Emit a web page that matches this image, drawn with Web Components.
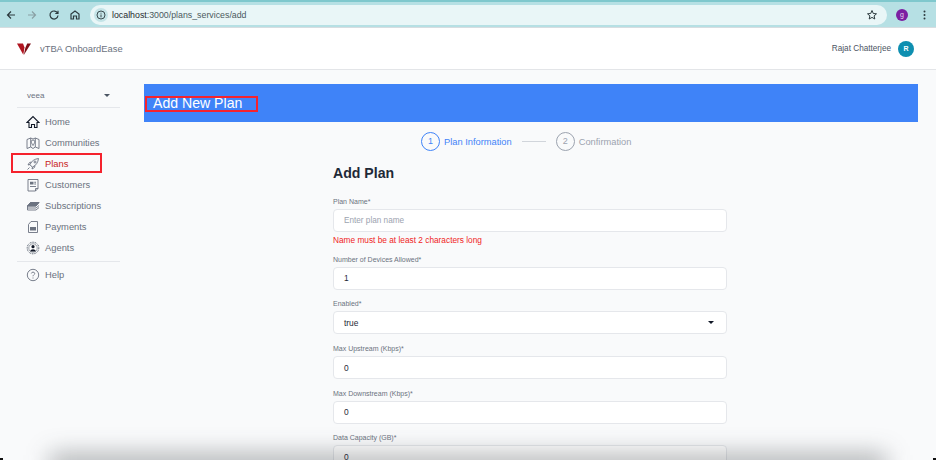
<!DOCTYPE html>
<html>
<head>
<meta charset="utf-8">
<style>
  html, body { margin: 0; height: 100%; overflow: hidden; background: #f9fafb; }
  body { font-family: "Liberation Sans", Arial, sans-serif; width: 936px; height: 460px; position: relative; display: flex; flex-direction: column; }
</style>
</head>
<body>
<browser-bar url-host="localhost" url-path=":3000/plans_services/add"></browser-bar>
<app-header user="Rajat Chatterjee"></app-header>
<app-shell>
  <side-nav slot="nav"></side-nav>
  <plan-form></plan-form>
</app-shell>
<bottom-shade></bottom-shade>

<script>
class BrowserBar extends HTMLElement {
  constructor() {
    super();
    const host = this.getAttribute('url-host');
    const path = this.getAttribute('url-path');
    this.attachShadow({mode: 'open'}).innerHTML = `
    <style>
      :host { display: flex; align-items: center; height: 28px; box-sizing: border-box; flex: none;
        background: #b6e0e4; border-top: 2px solid #7fc8cd; border-bottom: 1px solid #d7dde0; padding: 0 10px 0 5px; }
      svg { display: block; flex: none; }
      .btns { display: flex; gap: 9.300px; align-items: center; width: 85px; }
      .url { flex: 1; height: 20px; background: #e9f6f7; border-radius: 10px; display: flex; align-items: center;
        font-size: 8.800px; color: #4b5a5e; padding-left: 4px; min-width: 0; }
      .url b { font-weight: 400; color: #1f2a2e; }
      .info { width: 14px; height: 14px; border-radius: 50%; background: #c4e4e7; display: flex; align-items: center; justify-content: center; margin-right: 4px; }
      .star { margin-left: auto; margin-right: 9px; }
      .me { width: 12px; height: 12px; border-radius: 50%; background: #7b1fa2; color: #e6d5ec; font-size: 7px; text-align: center; line-height: 12px; margin: 0 15px 0 9px; flex: none; }
    </style>
    <div class="btns">
      <svg width="12" height="12" viewBox="0 0 12 12" fill="none" stroke="#2c3a3e" stroke-width="1.2"><path d="M10 6H2.500M6 2.500 2.500 6 6 9.500"/></svg>
      <svg width="12" height="12" viewBox="0 0 12 12" fill="none" stroke="#8aa0a4" stroke-width="1.2"><path d="M2 6h7.500M6 2.500 9.500 6 6 9.500"/></svg>
      <svg width="12" height="12" viewBox="0 0 12 12" fill="none" stroke="#2c3a3e" stroke-width="1.2"><path d="M9.600 4.200A4 4 0 1 0 10 6.500M10 1.800v2.700H7.300"/></svg>
      <svg width="12" height="12" viewBox="0 0 12 12" fill="none" stroke="#2c3a3e" stroke-width="1.200"><path d="M2 10V5l4-3 4 3v5H7.500V7h-3v3z"/></svg>
    </div>
    <div class="url">
      <span class="info"><svg width="10" height="10" viewBox="0 0 10 10" fill="none" stroke="#2c3a3e" stroke-width=".9"><circle cx="5" cy="5" r="4"/><path d="M5 4.500V7.300M5 2.800v.8"/></svg></span>
      <span><b>${host}</b>${path}</span>
      <svg class="star" width="12" height="12" viewBox="0 0 12 12" fill="none" stroke="#2c3a3e" stroke-width="1"><path d="M6 1.500 7.300 4.500l3.200.3-2.400 2.100.7 3.100L6 8.400 3.200 10l.7-3.100L1.500 4.800l3.200-.3z"/></svg>
    </div>
    <span class="me">g</span>
    <svg width="3" height="10" viewBox="0 0 3 10" fill="#2c3a3e"><circle cx="1.500" cy="1.500" r="1"/><circle cx="1.500" cy="5" r="1"/><circle cx="1.500" cy="8.500" r="1"/></svg>`;
  }
}
customElements.define('browser-bar', BrowserBar);

class AppHeader extends HTMLElement {
  constructor() {
    super();
    this.attachShadow({mode: 'open'}).innerHTML = `
    <style>
      :host { display: flex; align-items: center; flex: none; height: 42px; box-sizing: border-box; background: #fff;
        border-bottom: 1px solid #e3e5e8; padding: 0 22px 0 17px; }
      .name { margin-left: 9px; font-size: 9.350px; color: #6b7280; }
      .user { margin-left: auto; font-size: 8.200px; color: #4b5563; margin-right: 7px; }
      .av { width: 16px; height: 16px; border-radius: 50%; background: #0e8fb0; color: #fff; font-size: 7px; font-weight: 700; text-align: center; line-height: 16px; }
    </style>
    <svg width="14" height="14" viewBox="0 0 14 14"><path d="M0 1.500H6L7.500 5.500 6.300 12.800z" fill="#b01520"/><path d="M14 1.500 6.800 13 8.300 6 10.200 1.500z" fill="#7d0f17"/></svg>
    <span class="name">vTBA OnboardEase</span>
    <span class="user">${this.getAttribute('user')}</span>
    <span class="av">R</span>`;
  }
}
customElements.define('app-header', AppHeader);

class AppShell extends HTMLElement {
  constructor() {
    super();
    this.attachShadow({mode: 'open'}).innerHTML = `
    <style>
      :host { display: flex; flex: 1; min-height: 0; background: #f9fafb; }
      ::slotted(side-nav) { width: 144px; flex: none; }
    </style>
    <slot name="nav"></slot><slot></slot>`;
  }
}
customElements.define('app-shell', AppShell);

const NAV_ICONS = {
  home: '<path d="M1 7.500 7 1.500l6 6H11V12.500H8.500V9.500H5.500V12.500H3V7.500z" stroke="#111827" stroke-width="1.100"/>',
  map: '<path d="M1 3.500 4.700 2 7 3 9.300 2 13 3.500V12.500L9.300 11 7 12.500 4.700 11 1 12.500zM4.700 2V11M9.300 2V11"/><path d="M7 9.500C5.800 7.500 5.300 6.700 5.300 5.700A1.700 1.700 0 0 1 8.700 5.700C8.700 6.700 8.200 7.500 7 9.500z"/>',
  rocket: '<path d="M5 9 4 7.500C5.500 4 8.500 2 12.500 1.500 12 5.500 10 8.500 6.500 10zM4 7.500 2 8l1.500-2.500L5.500 5M6.500 10 6 12l2.500-1.500L9 8.500M3.500 10.500 1.500 12.500"/><circle cx="9" cy="5" r="1"/>',
  news: '<path d="M2 1.500h10v9l-2.500 2.500H2zM9.500 13v-2.500H12"/><path d="M4 3.800h3.500v2.700H4zM8.300 3.800H10v1H8.300zM8.300 5.500H10v1H8.300z" fill="#6b7280" stroke="none"/><path d="M4 8.500h6"/>',
  stack: '<path d="M1.500 11h8.500l3-2.500M1.500 9h8.500l3-2.500M1.500 7 4.500 3.500H13L10 7zM1.500 7V11" fill="none"/><path d="M1.500 7 4.500 3.500H13L10 7z" fill="#6b7280"/>',
  doc: '<path d="M5 1.500h6.500V12.500h-9V4.500z"/><path d="M4 7h6v3.500H4z" fill="#6b7280" stroke="none"/>',
  agent: '<circle cx="7" cy="7" r="5.800" stroke-dasharray="1 .8" stroke="#374151"/><circle cx="7" cy="7" r="4.200" fill="#fff" stroke="#374151" stroke-width=".5"/><circle cx="7" cy="5.700" r="1.600" fill="#111827" stroke="none"/><path d="M4.300 10.500c.2-3 5.200-3 5.400 0z" fill="#111827" stroke="none"/>',
  help: '<circle cx="7" cy="7" r="5.700"/><path d="M5.300 5.500C5.500 3.600 8.700 3.700 8.700 5.500 8.700 6.800 7 6.800 7 8.300M7 9.500v1"/>'
};

class NavItem extends HTMLElement {
  constructor() {
    super();
    const icon = NAV_ICONS[this.getAttribute('icon')];
    this.attachShadow({mode: 'open'}).innerHTML = `
    <style>
      :host { display: flex; align-items: center; gap: 5px; height: 21.100px; padding-left: 9px; font-size: 9.350px; color: #6b7280; }
      :host([active]) { color: #c81e1e; }
      svg { width: 14px; height: 14px; flex: none; fill: none; stroke: #6b7280; stroke-width: .9; }
    </style>
    <svg viewBox="0 0 14 14">${icon}</svg><slot></slot>`;
  }
}
customElements.define('nav-item', NavItem);

class SideNav extends HTMLElement {
  constructor() {
    super();
    this.attachShadow({mode: 'open'}).innerHTML = `
    <style>
      :host { display: block; padding: 17px 24px 0 17px; box-sizing: border-box; }
      .org { display: flex; align-items: center; justify-content: space-between; height: 19px; padding: 0 10px 2px; box-sizing: border-box; font-size: 8px; color: #6b7280; }
      .org i { width: 0; height: 0; border: 3px solid transparent; border-top: 3.500px solid #4b5563; border-bottom: 0; }
      hr { border: 0; height: 1px; background: #e5e7eb; margin: 1px 0 0; }
      .items { padding-top: 3px; }
      .help { margin-top: 2.500px; }
      .wrap { position: relative; }
      .box { position: absolute; left: -6px; top: 0; width: 91px; height: 20px; border: 2px solid #f5222d; box-sizing: border-box; pointer-events: none; }
    </style>
    <div class="org"><span>veea</span><i></i></div>
    <hr>
    <div class="items">
      <nav-item icon="home">Home</nav-item>
      <nav-item icon="map">Communities</nav-item>
      <div class="wrap"><nav-item icon="rocket" active>Plans</nav-item><span class="box"></span></div>
      <nav-item icon="news">Customers</nav-item>
      <nav-item icon="stack">Subscriptions</nav-item>
      <nav-item icon="doc">Payments</nav-item>
      <nav-item icon="agent">Agents</nav-item>
    </div>
    <hr style="margin-top:2.500px">
    <div class="help"><nav-item icon="help">Help</nav-item></div>`;
  }
}
customElements.define('side-nav', SideNav);

class FormField extends HTMLElement {
  constructor() {
    super();
    const value = this.getAttribute('value');
    const holder = this.getAttribute('placeholder');
    const select = this.hasAttribute('select');
    this.attachShadow({mode: 'open'}).innerHTML = `
    <style>
      :host { display: block; margin-bottom: 9.700px; }
      label { display: block; font-size: 7px; line-height: 9px; color: #6b7280; margin-bottom: 3px; }
      .box { height: 23px; box-sizing: border-box; background: #fff; border: 1px solid #e5e7eb; border-radius: 4px;
        display: flex; align-items: center; justify-content: space-between; padding: 0 11px 0 10px; font-size: 8.400px; color: #1f2937; }
      .box.empty { color: #9ca3af; font-size: 8.200px; }
      i { width: 0; height: 0; border: 3px solid transparent; border-top: 3.500px solid #111827; border-bottom: 0; margin-right: 1px; }
      .err { font-size: 8.300px; line-height: 9px; color: #f01d1d; margin-top: 4px; }
    </style>
    <label><slot></slot></label>
    <div class="box ${holder ? 'empty' : ''}"><span>${holder || value}</span>${select ? '<i></i>' : ''}</div>
    ${this.hasAttribute('error') ? `<div class="err">${this.getAttribute('error')}</div>` : ''}`;
  }
}
customElements.define('form-field', FormField);

class StepDot extends HTMLElement {
  constructor() {
    super();
    this.attachShadow({mode: 'open'}).innerHTML = `
    <style>
      :host { display: flex; align-items: center; gap: 4px; font-size: 9.300px; color: #9ca3af; }
      :host([on]) { color: #3f83f8; }
      b { font-weight: 400; width: 19px; height: 19px; box-sizing: border-box; border: 1px solid currentColor; border-radius: 50%; text-align: center; line-height: 17px; font-size: 9px; }
    </style>
    <b>${this.getAttribute('n')}</b><slot></slot>`;
  }
}
customElements.define('step-dot', StepDot);

class PlanForm extends HTMLElement {
  constructor() {
    super();
    this.attachShadow({mode: 'open'}).innerHTML = `
    <style>
      :host { display: block; width: 774px; padding-top: 14px; box-sizing: border-box; overflow: hidden; }
      .banner { position: relative; height: 38px; background: #3f83f8; color: #fff; font-size: 14.100px; display: flex; align-items: center; padding-left: 9px; }
      .box { position: absolute; left: 1px; top: 12px; width: 113px; height: 16px; border: 2px solid #f5222d; box-sizing: border-box; }
      .steps { display: flex; align-items: center; gap: 10px; height: 19px; margin: 10px 0 0 277px; }
      .line { width: 24px; height: 1px; background: #d1d5db; }
      .col { width: 394px; margin: 0 0 0 189px; }
      h2 { margin: 13px 0 15px; font-size: 14.100px; line-height: 18px; font-weight: 700; color: #1f2937; }
    </style>
    <div class="banner">Add New Plan<span class="box"></span></div>
    <div class="steps"><step-dot n="1" on>Plan Information</step-dot><span class="line"></span><step-dot n="2">Confirmation</step-dot></div>
    <div class="col">
      <h2>Add Plan</h2>
      <form-field placeholder="Enter plan name" error="Name must be at least 2 characters long">Plan Name*</form-field>
      <form-field value="1">Number of Devices Allowed*</form-field>
      <form-field value="true" select>Enabled*</form-field>
      <form-field value="0">Max Upstream (Kbps)*</form-field>
      <form-field value="0">Max Downstream (Kbps)*</form-field>
      <form-field value="0">Data Capacity (GB)*</form-field>
    </div>`;
  }
}
customElements.define('plan-form', PlanForm);

class BottomShade extends HTMLElement {
  constructor() {
    super();
    this.attachShadow({mode: 'open'}).innerHTML = `
    <style>
      :host { position: absolute; left: 0; right: 0; bottom: 0; height: 36px; overflow: hidden; pointer-events: none; }
      .s { position: absolute; left: 50px; right: 50px; bottom: -18px; height: 24px; background: rgba(40,45,50,.36); filter: blur(12px); }
      .c { position: absolute; bottom: 0; width: 3px; height: 2px; background: #111; }
    </style>
    <div class="s"></div><div class="c" style="left:0"></div><div class="c" style="right:0"></div>`;
  }
}
customElements.define('bottom-shade', BottomShade);
</script>
</body>
</html>
